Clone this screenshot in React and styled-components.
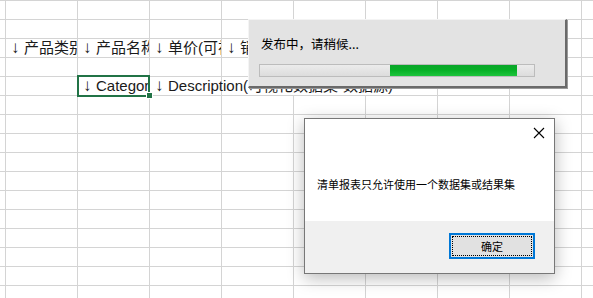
import styled, { createGlobalStyle } from 'styled-components';

const GlobalStyle = createGlobalStyle`
  html, body {
    margin: 0;
    padding: 0;
    background: #fff;
    overflow: hidden;
  }
  body {
    font-family: "Liberation Sans", "Noto Sans CJK SC", sans-serif;
  }
`

const ROWS = 16
const COLS = 9

const cells = {
    '2-1': { text: '产品类别' },
    '2-2': { text: '产品名称' },
    '2-3': { text: '单价(可视化数据集-数据源)' },
    '2-4': { text: '销售数量' },
    '2-5': { text: '销售金额' },
    '4-2': { text: 'Category', selected: true },
    '4-3': { text: 'Description(可视化数据集-数据源)', spill: true },
    '4-4': { covered: true },
    '4-5': { covered: true },
}

function App() {
    return <Page>
        <GlobalStyle />
        <Sheet>
        {
            Array.from({ length: ROWS }).map((_, r) => {
                return (<Row key={r}>
                    <Cell $edge />
                    {
                        Array.from({ length: COLS }).map((_, c) => {
                            const cell = cells[`${r}-${c + 1}`] || {}
                            return (
                                <Cell key={c} $selected={cell.selected} $covered={cell.covered}>
                                    {cell.text && <CellText $spill={cell.spill}><Arrow>↓</Arrow>{cell.text}</CellText>}
                                </Cell>
                            )
                        })
                    }
                </Row>)
            })
        }
        </Sheet>

        <Progress>
            <ProgressLabel>发布中，请稍候...</ProgressLabel>
            <Track>
                <Fill style={{ marginLeft: 130, width: 127 }} />
            </Track>
        </Progress>

        <MessageBox>
            <MessageBody>
                <CloseButton>
                    <svg width="12" height="12" viewBox="0 0 12 12">
                        <path d="M1 1 L11 11 M11 1 L1 11" stroke="#000" strokeWidth="1.1" fill="none" />
                    </svg>
                </CloseButton>
                <MessageText>清单报表只允许使用一个数据集或结果集</MessageText>
            </MessageBody>
            <MessageFooter>
                <OkButton>
                    <FocusRing>确定</FocusRing>
                </OkButton>
            </MessageFooter>
        </MessageBox>
    </Page>
}

export default App;

const Page = styled.div`
    position: relative;
    width: 593px;
    height: 298px;
    overflow: hidden;
    background: #fff;
`
const Sheet = styled.div`
    display: flex;
    flex-direction: column;
    border-top: 1px solid #d4d4d4;
`
const Row = styled.div`
    display: flex;
    height: 18px;
    border-bottom: 1px solid #d4d4d4;
`
const Cell = styled.div`
    position: relative;
    flex: none;
    width: ${p => p.$edge ? '5px' : '71px'};
    height: 18px;
    border-right: 1px solid ${p => p.$covered ? 'transparent' : '#d4d4d4'};
    z-index: ${p => p.$selected ? 2 : 'auto'};

    ${p => p.$selected && `
    &::before {
        content: '';
        position: absolute;
        left: -1px;
        top: -2px;
        width: 69px;
        height: 18px;
        border: 2px solid #217346;
    }
    &::after {
        content: '';
        position: absolute;
        left: 68px;
        top: 15px;
        width: 5px;
        height: 5px;
        background: #217346;
        border: 1px solid #fff;
    }`}
`
const CellText = styled.div`
    height: 18px;
    line-height: 18px;
    font-size: 15px;
    color: #1a1a1a;
    white-space: nowrap;
    padding-left: 5px;
    overflow: ${p => p.$spill ? 'visible' : 'hidden'};
    width: ${p => p.$spill ? 'max-content' : 'auto'};
`
const Arrow = styled.span`
    display: inline-block;
    width: 13px;
    font-size: 17px;
    line-height: 18px;
`

const Progress = styled.div`
    position: absolute;
    left: 248px;
    top: 19px;
    width: 296px;
    height: 66px;
    background: #e3e3e3;
    border-top: 1px solid #f4f4f4;
    border-left: 1px solid #f4f4f4;
    border-right: 2px solid #6a6a6a;
    border-bottom: 2px solid #6a6a6a;
    box-shadow: 1px 1px 0 #9a9a9a;
    display: flex;
    flex-direction: column;
    padding: 0 10px 0 10px;
    box-sizing: content-box;
`
const ProgressLabel = styled.div`
    font-family: "Noto Sans CJK SC", sans-serif;
    font-size: 12.5px;
    line-height: 17px;
    color: #000;
    margin-top: 15px;
    padding-left: 2px;
`
const Track = styled.div`
    margin-top: 12px;
    height: 11px;
    width: 274px;
    border: 1px solid #bcbcbc;
    background: linear-gradient(#ececec, #dcdcdc);
    display: flex;
`
const Fill = styled.div`
    height: 100%;
    background: linear-gradient(#0aa52a 0%, #06b025 45%, #1dc43c 100%);
`

const MessageBox = styled.div`
    position: absolute;
    left: 304px;
    top: 118px;
    width: 249px;
    height: 154px;
    border: 1px solid #777;
    background: #fff;
    box-shadow: 0 4px 16px rgba(0, 0, 0, 0.28);
    display: flex;
    flex-direction: column;
    font-family: "Noto Sans CJK SC", sans-serif;
`
const MessageBody = styled.div`
    position: relative;
    height: 102px;
    padding-left: 12px;
    display: flex;
    align-items: flex-start;
`
const CloseButton = styled.div`
    position: absolute;
    right: 9px;
    top: 8px;
    width: 12px;
    height: 12px;
    display: flex;
`
const MessageText = styled.div`
    margin-top: 58px;
    font-size: 11px;
    line-height: 14px;
    color: #000;
    white-space: nowrap;
`
const MessageFooter = styled.div`
    flex: 1;
    background: #f0f0f0;
    display: flex;
    justify-content: flex-end;
    align-items: flex-start;
    padding: 12px 19px 0 0;
`
const OkButton = styled.div`
    width: 82px;
    height: 22px;
    border: 2px solid #0078d7;
    background: #e1e1e1;
    display: flex;
    padding: 0;
`
const FocusRing = styled.div`
    flex: 1;
    margin: 1px;
    border: 1px dotted #000;
    font-size: 11px;
    color: #000;
    display: flex;
    align-items: center;
    justify-content: center;
`
